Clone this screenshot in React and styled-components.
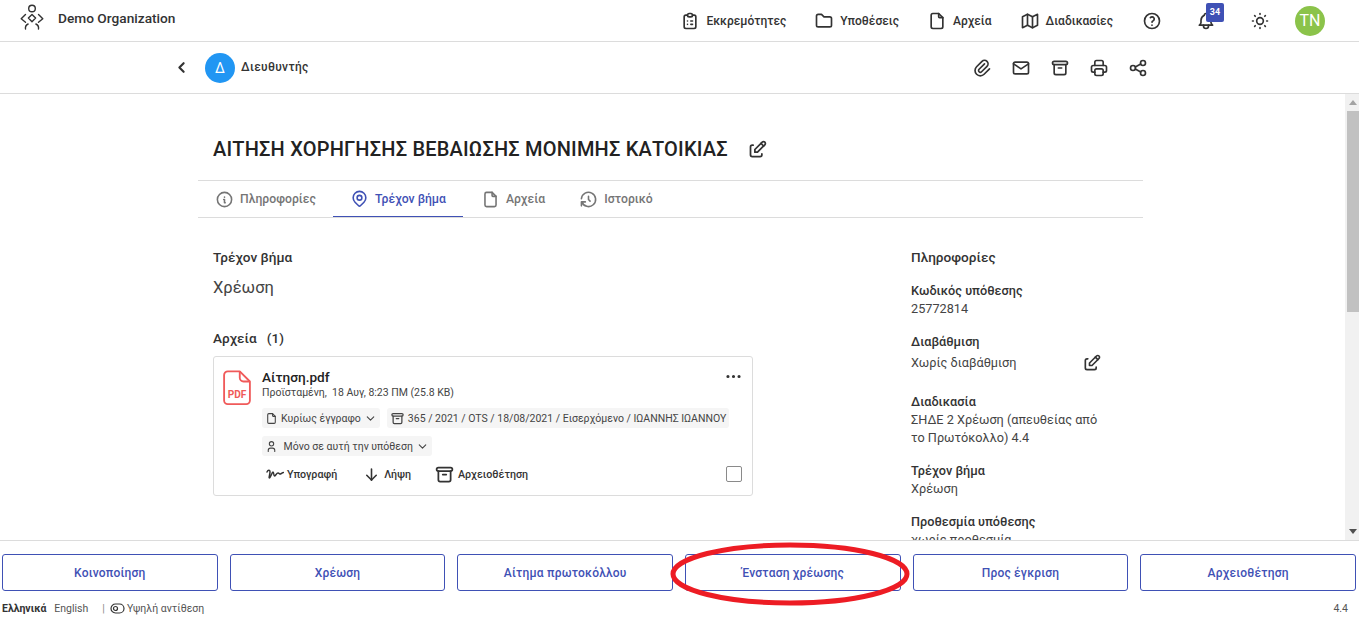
import React from "react";
import styled, { createGlobalStyle } from "styled-components";
import {
  TbArchive,
  TbArrowDown,
  TbBell,
  TbChevronDown,
  TbChevronLeft,
  TbClipboardList,
  TbDots,
  TbEdit,
  TbFile,
  TbFolder,
  TbHelp,
  TbHistory,
  TbInfoCircle,
  TbMail,
  TbMap,
  TbMapPin,
  TbPaperclip,
  TbPrinter,
  TbShare,
  TbSun,
  TbUser,
} from "react-icons/tb";

const GlobalStyle = createGlobalStyle`
  html, body {
    margin: 0;
    height: 100%;
    overflow: hidden;
    background: #fff;
    font-family: Roboto, "Noto Sans", sans-serif;
    color: #333;
  }
`;

const Page = styled.div`
  position: relative;
  height: 620px;
  display: flex;
  flex-direction: column;
`;

const TopBar = styled.header`
  height: 41px;
  flex: none;
  display: flex;
  align-items: center;
  border-bottom: 1px solid #dcdcdc;
  padding: 0 34px 0 19px;
`;

const Brand = styled.div`
  display: flex;
  align-items: center;
  gap: 13px;
  flex: 1;
  font-size: 13.7px;
  font-weight: 500;
  color: #333;
  margin-top: -6px;
`;

const TopNav = styled.nav`
  display: flex;
  align-items: center;
`;

const TopLink = styled.a`
  display: flex;
  align-items: center;
  gap: 6px;
  margin-left: ${(p) => p.$gap}px;
  font-size: 12px;
  font-weight: 500;
  color: #333;
  svg {
    font-size: 20px;
    color: #333;
  }
`;

const IconButton = styled.span`
  position: relative;
  display: flex;
  margin-left: ${(p) => p.$gap || 0}px;
  font-size: 20px;
  color: #333;
`;

const Badge = styled.span`
  position: absolute;
  top: -8px;
  left: 10px;
  width: 18px;
  height: 19px;
  display: flex;
  align-items: center;
  justify-content: center;
  border-radius: 2px;
  background: #3f51b5;
  color: #fff;
  font-size: 9px;
  font-weight: 700;
`;

const Avatar = styled.span`
  width: 30px;
  height: 30px;
  margin-left: 25px;
  border-radius: 50%;
  display: flex;
  align-items: center;
  justify-content: center;
  background: #8bc34a;
  color: #fff;
  font-size: 16px;
`;

const SubBar = styled.div`
  height: 51px;
  flex: none;
  display: flex;
  align-items: center;
  border-bottom: 1px solid #dcdcdc;
  padding: 0 211px 0 173px;
`;

const BackIcon = styled(TbChevronLeft)`
  font-size: 17px;
  stroke-width: 3;
  color: #333;
  margin-right: 15px;
`;

const RoleAvatar = styled.span`
  width: 30px;
  height: 30px;
  border-radius: 50%;
  display: flex;
  align-items: center;
  justify-content: center;
  background: #2196f3;
  color: #fff;
  font-size: 14px;
`;

const RoleName = styled.span`
  flex: 1;
  margin: -2px 0 0 6px;
  font-size: 12px;
  font-weight: 500;
  letter-spacing: 0.3px;
`;

const Actions = styled.div`
  display: flex;
  gap: 19px;
  font-size: 20px;
  color: #333;
`;

const Middle = styled.div`
  flex: 1;
  min-height: 0;
  display: flex;
`;

const Scroller = styled.main`
  flex: 1;
  min-width: 0;
  overflow: hidden;
`;

const ScrollRail = styled.div`
  width: 14px;
  flex: none;
  box-sizing: border-box;
  padding-left: 2px;
  display: flex;
  flex-direction: column;
  background: #f1f1f1;
`;

const ScrollArrow = styled.span`
  height: 17px;
  flex: none;
  display: flex;
  align-items: center;
  justify-content: center;
  margin-top: ${(p) => (p.$down ? "auto" : "0")};
  &::before {
    content: "";
    border-left: 4px solid transparent;
    border-right: 4px solid transparent;
    ${(p) =>
      p.$down
        ? "border-top: 5px solid #505050;"
        : "border-bottom: 5px solid #a3a3a3;"}
  }
`;

const ScrollThumb = styled.span`
  height: 201px;
  flex: none;
  background: #c1c1c1;
`;

const Content = styled.div`
  width: 945px;
  margin-left: 198px;
`;

const TitleRow = styled.div`
  height: 87px;
  display: flex;
  align-items: center;
  gap: 19px;
  padding: 24px 0 0 15px;
  box-sizing: border-box;
  border-bottom: 1px solid #dcdcdc;
  svg {
    font-size: 21px;
    color: #333;
  }
`;

const Title = styled.h1`
  margin: 0;
  font-size: 20px;
  font-weight: 500;
  letter-spacing: 0.19px;
  color: #222;
`;

const Tabs = styled.div`
  height: 36px;
  display: flex;
  border-bottom: 1px solid #dcdcdc;
`;

const Tab = styled.div`
  width: ${(p) => p.$width}px;
  display: flex;
  align-items: center;
  justify-content: center;
  gap: 6px;
  height: 36px;
  box-sizing: border-box;
  font-size: 12.2px;
  font-weight: 500;
  color: ${(p) => (p.$active ? "#3f51b5" : "#757575")};
  border-bottom: ${(p) => (p.$active ? "1px solid #3f51b5" : "none")};
  svg {
    font-size: 19px;
  }
`;

const Columns = styled.div`
  display: grid;
  grid-template-columns: 540px 191px;
  column-gap: 158px;
  padding: 31px 0 0 15px;
`;

const SectionLabel = styled.h2`
  margin: 0;
  font-size: 13.6px;
  line-height: 17px;
  font-weight: 500;
  color: #333;
`;

const StepName = styled.p`
  margin: 12px 0 32px;
  font-size: 16.5px;
  line-height: 20px;
  color: #444;
`;

const FileCard = styled.article`
  position: relative;
  height: 140px;
  margin-top: 9px;
  box-sizing: border-box;
  border: 1px solid #dcdcdc;
  border-radius: 3px;
  padding: 12px 0 0 9px;
  display: flex;
  gap: 11px;
`;

const PdfIcon = styled.svg`
  width: 28px;
  height: 35px;
  flex: none;
  margin-top: 1px;
`;

const FileBody = styled.div`
  min-width: 0;
  flex: 1;
`;

const FileName = styled.div`
  font-size: 13.6px;
  line-height: 16px;
  font-weight: 500;
  color: #222;
`;

const FileMeta = styled.div`
  font-size: 10.5px;
  line-height: 14px;
  margin-top: 1px;
  color: #444;
`;

const ChipRow = styled.div`
  display: flex;
  gap: 7px;
  margin-top: 8px;
`;

const Chip = styled.span`
  height: 20px;
  display: flex;
  align-items: center;
  gap: 3px;
  padding: 0 3px;
  border-radius: 3px;
  background: #f5f5f5;
  font-size: 10.5px;
  color: #444;
  white-space: nowrap;
  svg {
    font-size: ${(p) => p.$icon || 13}px;
    color: #444;
    flex: none;
  }
`;

const ToolRow = styled.div`
  display: flex;
  align-items: center;
  height: 20px;
  margin-top: 8px;
  padding-left: 4px;
`;

const Tool = styled.span`
  display: flex;
  align-items: center;
  gap: 3px;
  margin-right: ${(p) => p.$gap}px;
  font-size: 10.7px;
  font-weight: 500;
  color: #333;
  svg {
    font-size: ${(p) => p.$icon || 18}px;
    color: #333;
  }
`;

const MoreIcon = styled(TbDots)`
  position: absolute;
  top: 10px;
  right: 9px;
  font-size: 19px;
  color: #333;
`;

const Check = styled.span`
  position: absolute;
  right: 10px;
  bottom: 13px;
  width: 14px;
  height: 14px;
  border: 1px solid #8a8a8a;
  border-radius: 2px;
`;

const Aside = styled.aside`
  font-size: 12.7px;
  line-height: 18px;
  color: #444;
`;

const InfoHeading = styled(SectionLabel)`
  margin-bottom: 16px;
`;

const InfoItem = styled.div`
  margin-bottom: ${(p) => p.$gap || 15}px;
`;

const InfoLabel = styled.div`
  font-weight: 500;
  color: #333;
`;

const InfoValueRow = styled.div`
  display: flex;
  align-items: center;
  justify-content: space-between;
  height: 24px;
  svg {
    font-size: 20px;
    color: #333;
  }
`;

const BottomBar = styled.footer`
  height: 80px;
  flex: none;
  box-sizing: border-box;
  border-top: 1px solid #dcdcdc;
  padding: 13px 3px 0 2px;
  background: #fff;
`;

const ButtonRow = styled.div`
  display: grid;
  grid-template-columns: repeat(6, 1fr);
  column-gap: 12px;
`;

const ActionButton = styled.button`
  height: 37px;
  background: #fff;
  border: 1px solid #3f51b5;
  border-radius: 3px;
  font-family: inherit;
  font-size: 12px;
  font-weight: 500;
  letter-spacing: 0.2px;
  color: #3f51b5;
  padding: 0;
`;

const MetaRow = styled.div`
  display: flex;
  align-items: center;
  height: 14px;
  margin-top: 10px;
  font-size: 10.5px;
  color: #555;
`;

const LangActive = styled.b`
  font-weight: 700;
  color: #333;
  margin-right: 8px;
`;

const Divider = styled.span`
  margin: 0 5px 0 14px;
  color: #888;
`;

const Contrast = styled.span`
  display: flex;
  align-items: center;
  gap: 2px;
`;

const Version = styled.span`
  margin-left: auto;
  margin-right: 8px;
`;

const RedCircle = styled.svg`
  position: absolute;
  left: 668px;
  top: 541px;
  width: 244px;
  height: 66px;
  pointer-events: none;
`;

function LogoMark() {
  return (
    <svg width="26" height="30" viewBox="0 2 26 30" fill="none" stroke="#333" strokeWidth="1.4" strokeLinecap="round" strokeLinejoin="round">
      <circle cx="13" cy="7.5" r="3.3" />
      <path d="M13 13.5l3.6 3.6L13 20.7l-3.6-3.6z" />
      <path d="M6.5 13.5L2.2 17.8l4.3 3.4" />
      <path d="M19.5 13.5l4.3 4.3-4.3 3.4" />
      <path d="M6.5 28c-.4-2.3.6-4 2.6-5" />
      <path d="M19.5 28c.4-2.3-.6-4-2.6-5" />
    </svg>
  );
}

function SignIcon() {
  return (
    <svg width="18" height="12" viewBox="0 0 18 12" fill="none" stroke="#333" strokeWidth="1.5" strokeLinecap="round" strokeLinejoin="round">
      <path d="M1 4c1-2 3-2.5 3 0S2.5 10 3.5 10 6 4 7 4s.5 4 1.5 4 2-3 3.5-3 1.5 1.5 2.5 1 2-1.5 3-1.5" />
    </svg>
  );
}

function ContrastIcon() {
  return (
    <svg width="15" height="11" viewBox="0 0 15 11" fill="none" stroke="#333" strokeWidth="1.2">
      <rect x="1" y="1" width="13" height="9" rx="4.5" />
      <circle cx="5.5" cy="5.5" r="2" />
    </svg>
  );
}

const buttons = ["Κοινοποίηση", "Χρέωση", "Αίτημα πρωτοκόλλου", "Ένσταση χρέωσης", "Προς έγκριση", "Αρχειοθέτηση"];

export default function App() {
  return (
    <Page>
      <GlobalStyle />
      <TopBar>
        <Brand>
          <LogoMark />
          Demo Organization
        </Brand>
        <TopNav>
          <TopLink $gap={0}><TbClipboardList />Εκκρεμότητες</TopLink>
          <TopLink $gap={28}><TbFolder />Υποθέσεις</TopLink>
          <TopLink $gap={28}><TbFile />Αρχεία</TopLink>
          <TopLink $gap={28}><TbMap />Διαδικασίες</TopLink>
          <IconButton $gap={29}><TbHelp /></IconButton>
          <IconButton $gap={34}><TbBell /><Badge>34</Badge></IconButton>
          <IconButton $gap={34}><TbSun /></IconButton>
          <Avatar>TN</Avatar>
        </TopNav>
      </TopBar>
      <SubBar>
        <BackIcon />
        <RoleAvatar>Δ</RoleAvatar>
        <RoleName>Διευθυντής</RoleName>
        <Actions>
          <TbPaperclip />
          <TbMail />
          <TbArchive />
          <TbPrinter />
          <TbShare />
        </Actions>
      </SubBar>
      <Middle>
        <Scroller>
          <Content>
            <TitleRow>
              <Title>ΑΙΤΗΣΗ ΧΟΡΗΓΗΣΗΣ ΒΕΒΑΙΩΣΗΣ ΜΟΝΙΜΗΣ ΚΑΤΟΙΚΙΑΣ</Title>
              <TbEdit />
            </TitleRow>
            <Tabs>
              <Tab $width={135}><TbInfoCircle />Πληροφορίες</Tab>
              <Tab $width={130} $active><TbMapPin />Τρέχον βήμα</Tab>
              <Tab $width={100}><TbFile />Αρχεία</Tab>
              <Tab $width={106}><TbHistory />Ιστορικό</Tab>
            </Tabs>
            <Columns>
              <section>
                <SectionLabel>Τρέχον βήμα</SectionLabel>
                <StepName>Χρέωση</StepName>
                <SectionLabel>Αρχεία &nbsp;&nbsp;(1)</SectionLabel>
                <FileCard>
                  <PdfIcon viewBox="0 0 30 38" fill="none">
                    <path d="M5 1.5h13l11 11V33a4 4 0 0 1-4 4H5a4 4 0 0 1-4-4V5.5a4 4 0 0 1 4-4z" stroke="#f05a5a" strokeWidth="2" strokeLinejoin="round" />
                    <path d="M18 1.5v7a4 4 0 0 0 4 4h7" stroke="#f05a5a" strokeWidth="2" />
                    <text x="15" y="30" textAnchor="middle" fontSize="11" fontWeight="700" fill="#f05a5a" fontFamily="Roboto, sans-serif">PDF</text>
                  </PdfIcon>
                  <FileBody>
                    <FileName>Αίτηση.pdf</FileName>
                    <FileMeta>Προϊσταμένη, &nbsp;18 Αυγ, 8:23 ΠΜ (25.8 KB)</FileMeta>
                    <ChipRow>
                      <Chip><TbFile />Κυρίως έγγραφο<TbChevronDown /></Chip>
                      <Chip $icon={15}><TbArchive />365 / 2021 / OTS / 18/08/2021 / Εισερχόμενο / ΙΩΑΝΝΗΣ ΙΩΑΝΝΟΥ</Chip>
                    </ChipRow>
                    <ChipRow>
                      <Chip><TbUser />&nbsp;Μόνο σε αυτή την υπόθεση<TbChevronDown /></Chip>
                    </ChipRow>
                    <ToolRow>
                      <Tool $gap={25}><SignIcon />Υπογραφή</Tool>
                      <Tool $gap={23} $icon={19}><TbArrowDown />Λήψη</Tool>
                      <Tool $gap={0} $icon={21}><TbArchive />Αρχειοθέτηση</Tool>
                    </ToolRow>
                  </FileBody>
                  <MoreIcon />
                  <Check />
                </FileCard>
              </section>
              <Aside>
                <InfoHeading>Πληροφορίες</InfoHeading>
                <InfoItem>
                  <InfoLabel>Κωδικός υπόθεσης</InfoLabel>
                  25772814
                </InfoItem>
                <InfoItem $gap={18}>
                  <InfoLabel>Διαβάθμιση</InfoLabel>
                  <InfoValueRow>Χωρίς διαβάθμιση<TbEdit /></InfoValueRow>
                </InfoItem>
                <InfoItem>
                  <InfoLabel>Διαδικασία</InfoLabel>
                  ΣΗΔΕ 2 Χρέωση (απευθείας από το Πρωτόκολλο) 4.4
                </InfoItem>
                <InfoItem>
                  <InfoLabel>Τρέχον βήμα</InfoLabel>
                  Χρέωση
                </InfoItem>
                <InfoItem>
                  <InfoLabel>Προθεσμία υπόθεσης</InfoLabel>
                  χωρίς προθεσμία
                </InfoItem>
              </Aside>
            </Columns>
          </Content>
        </Scroller>
        <ScrollRail>
          <ScrollArrow />
          <ScrollThumb />
          <ScrollArrow $down />
        </ScrollRail>
      </Middle>
      <BottomBar>
        <ButtonRow>
          {buttons.map((label) => (
            <ActionButton key={label}>{label}</ActionButton>
          ))}
        </ButtonRow>
        <MetaRow>
          <LangActive>Ελληνικά</LangActive>
          English
          <Divider>|</Divider>
          <Contrast><ContrastIcon />Υψηλή αντίθεση</Contrast>
          <Version>4.4</Version>
        </MetaRow>
      </BottomBar>
      <RedCircle viewBox="0 0 244 66" fill="none">
        <ellipse cx="122" cy="33" rx="117" ry="29" stroke="#ed1c24" strokeWidth="5" />
      </RedCircle>
    </Page>
  );
}
